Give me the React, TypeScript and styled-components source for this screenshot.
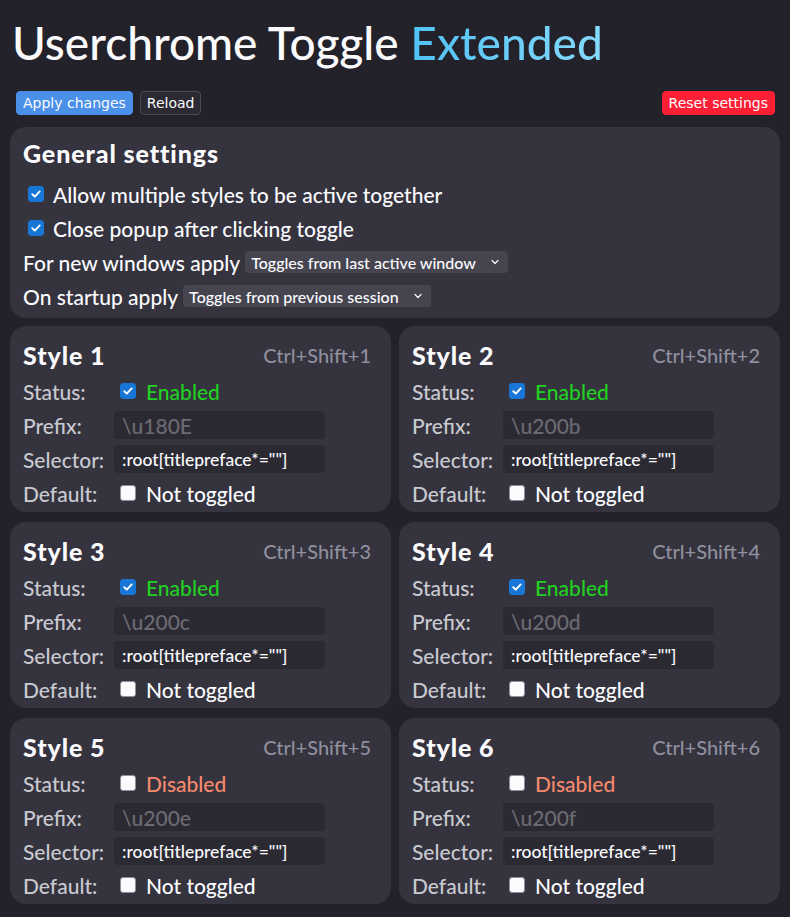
import React from "react";
import styled, { createGlobalStyle } from "styled-components";

const GlobalStyle = createGlobalStyle`
  body {
    margin: 0;
    background-color: #23222b;
    color: #fbfbfe;
    font-family: Lato, "Open Sans", sans-serif;
    font-weight: 500;
  }
`;

type StyleItem = {
  id: number;
  prefix: string;
  enabled: boolean;
};

const STYLES: StyleItem[] = [
  { id: 1, prefix: "\\u180E", enabled: true },
  { id: 2, prefix: "\\u200b", enabled: true },
  { id: 3, prefix: "\\u200c", enabled: true },
  { id: 4, prefix: "\\u200d", enabled: true },
  { id: 5, prefix: "\\u200e", enabled: false },
  { id: 6, prefix: "\\u200f", enabled: false },
];

function Checkbox({ checked }: { checked: boolean }) {
  return (
    <Box $checked={checked}>
      {checked && (
        <svg width="12" height="12" viewBox="0 0 12 12">
          <path
            d="M2.3 6.2 L4.8 8.6 L9.7 3.4"
            fill="none"
            stroke="#fff"
            strokeWidth="1.9"
            strokeLinecap="round"
            strokeLinejoin="round"
          />
        </svg>
      )}
    </Box>
  );
}

function Select({ value }: { value: string }) {
  return (
    <SelectBox>
      {value}
      <svg width="10" height="10" viewBox="0 0 10 10">
        <path
          d="M2 3.5 L5 6.5 L8 3.5"
          fill="none"
          stroke="#fbfbfe"
          strokeWidth="1.2"
          strokeLinecap="round"
          strokeLinejoin="round"
        />
      </svg>
    </SelectBox>
  );
}

function StyleCard({ item }: { item: StyleItem }) {
  return (
    <Card>
      <CardHeader>
        <CardTitle>Style {item.id}</CardTitle>
        <Shortcut>Ctrl+Shift+{item.id}</Shortcut>
      </CardHeader>
      <FieldGrid>
        <Label>Status:</Label>
        <Value>
          <Checkbox checked={item.enabled} />
          <Status $enabled={item.enabled}>
            {item.enabled ? "Enabled" : "Disabled"}
          </Status>
        </Value>
        <Label>Prefix:</Label>
        <Input $placeholder>{item.prefix}</Input>
        <Label>Selector:</Label>
        <Input>:root[titlepreface*=""]</Input>
        <Label>Default:</Label>
        <Value>
          <Checkbox checked={false} />
          <span>Not toggled</span>
        </Value>
      </FieldGrid>
    </Card>
  );
}

export default function App() {
  return (
    <>
      <GlobalStyle />
      <Page>
        <Title>
          Userchrome Toggle <Accent>Extended</Accent>
        </Title>
        <Toolbar>
          <Group>
            <Button $variant="primary">Apply changes</Button>
            <Button>Reload</Button>
          </Group>
          <Button $variant="danger">Reset settings</Button>
        </Toolbar>
        <GeneralCard>
          <CardTitle>General settings</CardTitle>
          <SettingsList>
            <CheckRow>
              <Checkbox checked />
              Allow multiple styles to be active together
            </CheckRow>
            <CheckRow>
              <Checkbox checked />
              Close popup after clicking toggle
            </CheckRow>
            <SelectRow>
              For new windows apply
              <Select value="Toggles from last active window" />
            </SelectRow>
            <SelectRow>
              On startup apply
              <Select value="Toggles from previous session" />
            </SelectRow>
          </SettingsList>
        </GeneralCard>
        <CardGrid>
          {STYLES.map((item) => (
            <StyleCard key={item.id} item={item} />
          ))}
        </CardGrid>
      </Page>
    </>
  );
}

const Page = styled.div`
  display: flex;
  flex-direction: column;
  gap: 8px;
  padding: 0 10px 10px;
`;

const Title = styled.h1`
  margin: 13px 0 10px 2px;

  font-weight: 500;
  font-size: 46px;
  line-height: 60px;

  color: #fbfbfe;
`;

const Accent = styled.span`
  background: linear-gradient(90deg, #4fc1f4, #86dafd);
  -webkit-background-clip: text;
  background-clip: text;
  color: transparent;
`;

const Toolbar = styled.div`
  display: flex;
  justify-content: space-between;
  align-items: center;
  padding: 0 5px 0 6px;
  margin-bottom: 4px;
`;

const Group = styled.div`
  display: flex;
  gap: 7px;
`;

const Button = styled.button<{ $variant?: "primary" | "danger" }>`
  box-sizing: border-box;
  height: 24px;
  padding: 0 6px;

  border-radius: 4px;
  border: 1px solid
    ${({ $variant }) =>
      $variant === "primary"
        ? "#4a8fe8"
        : $variant === "danger"
        ? "#ff2036"
        : "#4a4954"};
  background-color: ${({ $variant }) =>
    $variant === "primary"
      ? "#4a8fe8"
      : $variant === "danger"
      ? "#ff1f35"
      : "#2b2a33"};

  font-family: "DejaVu Sans", sans-serif;
  font-size: 14px;
  color: #fbfbfe;
`;

const Card = styled.div`
  box-sizing: border-box;
  display: flex;
  flex-direction: column;
  padding: 10px 13px 2px;

  border-radius: 16px;
  background-color: #34333e;
`;

const GeneralCard = styled(Card)`
  padding-bottom: 5px;
`;

const CardTitle = styled.div`
  font-weight: 900;
  font-size: 25px;
  line-height: 32px;
  letter-spacing: 0.9px;

  color: #fbfbfe;
`;

const SettingsList = styled.div`
  display: flex;
  flex-direction: column;
  margin-top: 8px;
`;

const CheckRow = styled.div`
  display: flex;
  align-items: center;
  gap: 9px;
  height: 34px;
  padding-left: 5px;

  font-size: 21px;
`;

const SelectRow = styled.div`
  display: flex;
  align-items: center;
  gap: 5px;
  height: 34px;

  font-size: 21px;
`;

const SelectBox = styled.div`
  display: flex;
  align-items: center;
  gap: 14px;
  height: 22px;
  padding: 0 8px 0 6px;

  border-radius: 4px;
  background-color: #46454f;

  font-size: 16px;
  color: #fbfbfe;
`;

const Box = styled.span<{ $checked: boolean }>`
  box-sizing: border-box;
  display: inline-flex;
  align-items: center;
  justify-content: center;
  flex: none;
  width: 16px;
  height: 16px;

  border-radius: 3px;
  background-color: ${({ $checked }) => ($checked ? "#1877d6" : "#fbfbfe")};
  border: 1px solid ${({ $checked }) => ($checked ? "#1877d6" : "#8f8f9d")};
`;

const CardGrid = styled.div`
  display: grid;
  grid-template-columns: 1fr 1fr;
  column-gap: 8px;
  row-gap: 10px;
`;

const CardHeader = styled.div`
  display: flex;
  justify-content: space-between;
  align-items: center;
  height: 38px;
  padding-right: 7px;
`;

const Shortcut = styled.div`
  font-size: 20px;
  color: #8f8f9d;
`;

const FieldGrid = styled.div`
  display: grid;
  grid-template-columns: 91px 211px;
  grid-auto-rows: 34px;
  align-items: center;
`;

const Label = styled.div`
  font-size: 21px;
  color: #c9c9d0;
`;

const Value = styled.div`
  display: flex;
  align-items: center;
  gap: 10px;
  padding-left: 6px;

  font-size: 21px;
  color: #fbfbfe;
`;

const Status = styled.span<{ $enabled: boolean }>`
  color: ${({ $enabled }) => ($enabled ? "#22d022" : "#f7896c")};
`;

const Input = styled.div<{ $placeholder?: boolean }>`
  box-sizing: border-box;
  display: flex;
  align-items: center;
  height: 28px;
  padding: 0 8px;

  border-radius: 4px;
  background-color: #2b2a33;

  font-size: ${({ $placeholder }) => ($placeholder ? "21px" : "17.5px")};
  color: ${({ $placeholder }) => ($placeholder ? "#6b6a73" : "#fbfbfe")};
`;
